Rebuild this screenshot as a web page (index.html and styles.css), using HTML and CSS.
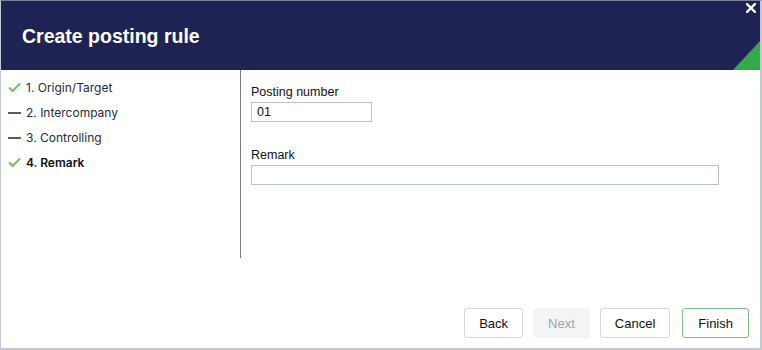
FILE: index.html
```html
<!DOCTYPE html>
<html lang="en">
<head>
  <meta charset="UTF-8">
  <title>Create posting rule</title>
  <link rel="stylesheet" href="styles.css">
</head>
<body>

<div class="dialog">
  <!-- Header -->
  <div class="header">
    <h1>Create posting rule</h1>
    <svg class="close" width="10" height="10" viewBox="0 0 10 10">
      <path d="M1 1 L9 9 M9 1 L1 9" stroke="#ffffff" stroke-width="2.4" stroke-linecap="square"/>
    </svg>
    <div class="corner"></div>
  </div>

  <div class="main">
    <!-- Steps -->
    <ul class="steps">
      <li>
        <svg class="mark" width="13" height="11" viewBox="0 0 13 11"><path d="M1 5.5 L4.6 9 L12 1.5" fill="none" stroke="#77be66" stroke-width="2"/></svg>
        1. Origin/Target
      </li>
      <li><span class="mark dash"></span>2. Intercompany</li>
      <li><span class="mark dash"></span>3. Controlling</li>
      <li class="active">
        <svg class="mark" width="13" height="11" viewBox="0 0 13 11"><path d="M1 5.5 L4.6 9 L12 1.5" fill="none" stroke="#77be66" stroke-width="2"/></svg>
        4. Remark
      </li>
    </ul>

    <!-- Form -->
    <div class="form">
      <label class="field">
        <span>Posting number</span>
        <input class="input short" type="text" value="01">
      </label>
      <label class="field">
        <span>Remark</span>
        <input class="input long" type="text" value="">
      </label>
    </div>
  </div>

  <!-- Buttons -->
  <div class="footer">
    <button class="btn">Back</button>
    <button class="btn disabled">Next</button>
    <button class="btn">Cancel</button>
    <button class="btn primary">Finish</button>
  </div>
</div>

</body>
</html>
```

FILE: styles.css
```css
html, body {
  margin: 0;
  padding: 0;
  background: #ffffff;
}

body {
  font-family: "Liberation Sans", Arial, sans-serif;
  color: #1a1a1a;
}

.dialog {
  width: 762px;
  height: 350px;
  box-sizing: border-box;
  border-top: 1px solid #7c819b;
  border-left: 1px solid #c4cad4;
  border-right: 2px solid #c4cad4;
  border-bottom: 2px solid #c4cad4;
  display: flex;
  flex-direction: column;
  overflow: hidden;
}

.header {
  position: relative;
  height: 69px;
  background: #1f2354;
  flex-shrink: 0;
  overflow: hidden;
}

.header h1 {
  margin: 0;
  padding: 24px 0 0 21px;
  font-size: 19.5px;
  font-weight: bold;
  color: #ffffff;
}

.close {
  position: absolute;
  top: 2px;
  right: 4px;
}

.corner {
  position: absolute;
  right: 0;
  bottom: 0;
  width: 0;
  height: 0;
  border-left: 27px solid transparent;
  border-bottom: 29px solid #34a84a;
}

.main {
  display: flex;
  flex: 1;
}

.steps {
  list-style: none;
  margin: 0;
  padding: 5px 0 0 7px;
  width: 232px;
  height: 183px;
  border-right: 1px solid #7a7a7a;
  font-family: Inter, "Noto Sans", sans-serif;
  font-size: 12px;
  color: #262b3a;
}

.steps li {
  display: flex;
  align-items: center;
  height: 25px;
}

.steps li.active {
  font-weight: 600;
  color: #111111;
}

.mark {
  width: 13px;
  margin-right: 5px;
  flex-shrink: 0;
}

.dash {
  height: 2px;
  background: #565b6b;
}

.form {
  padding: 15px 0 0 10px;
  display: flex;
  flex-direction: column;
  gap: 26px;
  flex: 1;
}

.field {
  display: flex;
  flex-direction: column;
  gap: 2px;
  font-size: 12.5px;
  color: #111111;
}

.field span {
  line-height: 15px;
}

.input {
  box-sizing: border-box;
  height: 20px;
  border: 1px solid #b9c3d0;
  border-radius: 0;
  padding: 0 5px;
  font-family: "Liberation Sans", Arial, sans-serif;
  font-size: 12.5px;
  color: #111111;
  outline: none;
}

.short {
  width: 121px;
}

.long {
  width: 468px;
}

.footer {
  display: flex;
  justify-content: flex-end;
  gap: 10px;
  padding: 0 11px 10px 0;
}

.btn {
  height: 30px;
  padding: 0 14px;
  background: #ffffff;
  border: 1px solid #d3d8e2;
  border-radius: 3px;
  font-family: "Liberation Sans", Arial, sans-serif;
  font-size: 13px;
  color: #111111;
}

.btn.disabled {
  background: #f3f4f6;
  border-color: #f3f4f6;
  color: #9ea3ad;
}

.btn.primary {
  border-color: #7fbd86;
  padding: 0 15px;
  margin-left: 2px;
}
```
